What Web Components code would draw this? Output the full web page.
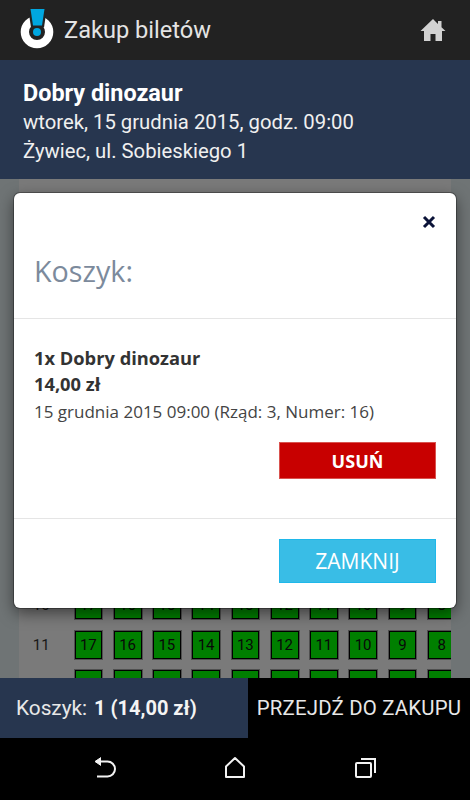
<!DOCTYPE html>
<html lang="pl">
<head>
<meta charset="utf-8">
<title>Zakup biletów</title>
<style>
  html, body { margin: 0; height: 100%; background: #000; overflow: hidden; }
  body { font-family: Roboto, sans-serif; }
  ticket-app { height: 800px; }
</style>
</head>
<body>
<ticket-app>
  <app-header title-text="Zakup biletów"></app-header>
  <event-info>
    <strong slot="name">Dobry dinozaur</strong>
    <span slot="date">wtorek, 15 grudnia 2015, godz. 09:00</span>
    <span slot="place">Żywiec, ul. Sobieskiego 1</span>
  </event-info>
  <seat-map first-row="10" rows="3"></seat-map>
  <cart-modal>
    <span slot="title">Koszyk:</span>
    <strong slot="item">1x Dobry dinozaur</strong>
    <strong slot="price">14,00 zł</strong>
    <span slot="details">15 grudnia 2015 09:00 (Rząd: 3, Numer: 16)</span>
  </cart-modal>
  <cart-bar summary="1 (14,00 zł)"></cart-bar>
  <nav-bar></nav-bar>
</ticket-app>

<script>
// Page shell: stacks the bars and keeps the modal over the seat map
class TicketApp extends HTMLElement {
  constructor() {
    super();
    this.attachShadow({ mode: 'open' });
    this.shadowRoot.innerHTML = `
      <style>
        :host {
          display: flex;
          flex-direction: column;
          position: relative;
          width: 470px;
          overflow: hidden;
        }
      </style>
      <slot></slot>
    `;
  }
}

class AppHeader extends HTMLElement {
  constructor() {
    super();
    this.attachShadow({ mode: 'open' });
  }

  connectedCallback() {
    this.shadowRoot.innerHTML = `
      <style>
        :host {
          display: flex;
          align-items: center;
          height: 60px;
          flex: none;
          box-sizing: border-box;
          padding: 0 24px 0 20px;
          background: #222;
          color: #e4e4e4;
        }
        .logo { width: 36px; height: 50px; flex: none; margin-top: -2px; }
        h1 {
          flex: 1;
          margin: 0 0 0 8px;
          font: 400 23.600px Roboto, sans-serif;
        }
        .home { width: 26px; height: 24px; flex: none; }
      </style>
      <svg class="logo" viewBox="0 0 36 50" aria-hidden="true">
        <path d="M17 11.700a16.300 16.300 0 1 0 0 32.600a16.300 16.300 0 1 0 0-32.600z M17 20a8 8 0 1 1 0 16a8 8 0 1 1 0-16z" fill="#fff" fill-rule="evenodd"/>
        <path d="M8 3h19l-3 20.500h-13z" fill="#222"/>
        <path d="M10.500 5h14l-2.500 16.500h-9z" fill="#00a7e1"/>
        <circle cx="17" cy="28" r="4" fill="#00a7e1"/>
      </svg>
      <h1>${this.getAttribute('title-text')}</h1>
      <svg class="home" viewBox="0 0 26 24" aria-hidden="true">
        <path d="M13 1 0.500 13h3.500v10h6.500v-7h5v7h6.500v-10h3.500l-4-3.800v-6.200h-3.500v2.900z" fill="#d2d2d2"/>
      </svg>
    `;
  }
}

class EventInfo extends HTMLElement {
  constructor() {
    super();
    this.attachShadow({ mode: 'open' });
    this.shadowRoot.innerHTML = `
      <style>
        :host {
          display: flex;
          flex-direction: column;
          flex: none;
          height: 119px;
          box-sizing: border-box;
          padding: 18px 23px 0;
          background: #27364f;
          color: #f0f0f0;
          font: 400 20.300px/28.500px Roboto, sans-serif;
        }
        ::slotted([slot="name"]) {
          color: #fff;
          font-size: 23.400px;
          font-weight: 700;
          line-height: 30px;
        }
      </style>
      <slot name="name"></slot>
      <slot name="date"></slot>
      <slot name="place"></slot>
    `;
  }
}

// Seat rows behind the dimmed overlay
class SeatMap extends HTMLElement {
  constructor() {
    super();
    this.attachShadow({ mode: 'open' });
  }

  connectedCallback() {
    const first = Number(this.getAttribute('first-row'));
    const count = Number(this.getAttribute('rows'));
    const seats = [17, 16, 15, 14, 13, 12, 11, 10, 9, 8];
    let rows = '';
    for (let r = first; r < first + count; r++) {
      rows += `<div class="row"><span class="label">${r}</span>` +
        seats.map(s => `<span class="seat">${s}</span>`).join('') + '</div>';
    }
    this.shadowRoot.innerHTML = `
      <style>
        :host {
          display: block;
          flex: none;
          height: 499px;
          background: #dfe8ea;
          position: relative;
          overflow: hidden;
        }
        .panel {
          margin: 0 19px;
          height: 100%;
          box-sizing: border-box;
          padding-top: 412.500px;
          background: #f4f4f4;
          overflow: hidden;
        }
        .row {
          display: flex;
          align-items: center;
          gap: 11.500px;
          height: 27.750px;
          margin-bottom: 11.500px;
          white-space: nowrap;
          font: 400 15px Roboto, sans-serif;
          color: #333;
        }
        .label { width: 44.500px; flex: none; text-align: center; margin-right: -0.500px; }
        .seat {
          display: flex;
          align-items: center;
          justify-content: center;
          flex: none;
          width: 27.750px;
          height: 27.750px;
          box-sizing: border-box;
          border: 1px solid #000;
          box-shadow: 0 0 0 1px rgba(0, 0, 0, 0.35);
          background: #0f0;
          color: #111;
        }
        .dim {
          position: absolute;
          inset: 0;
          background: rgba(0, 0, 0, 0.5);
        }
      </style>
      <div class="panel">${rows}</div>
      <div class="dim"></div>
    `;
  }
}

class CartModal extends HTMLElement {
  constructor() {
    super();
    this.attachShadow({ mode: 'open' });
    this.shadowRoot.innerHTML = `
      <style>
        :host {
          position: absolute;
          left: 14px;
          top: 193px;
          width: 442px;
          height: 415px;
          display: flex;
          flex-direction: column;
          box-sizing: border-box;
          background: #fff;
          border-radius: 6px;
          box-shadow: 0 0 0 1px rgba(0, 0, 0, 0.3), 0 5px 15px rgba(0, 0, 0, 0.5);
          font-family: "Open Sans", sans-serif;
          color: #333;
        }
        header {
          height: 126px;
          flex: none;
          box-sizing: border-box;
          padding: 0 20px;
          border-bottom: 1px solid #e5e5e5;
          position: relative;
        }
        .close {
          position: absolute;
          right: 20px;
          top: 22px;
          width: 14px;
          height: 14px;
        }
        .title {
          margin: 0;
          padding-top: 58px;
          font-size: 28.700px;
          font-weight: 400;
          line-height: 40px;
          color: #7c8a9c;
        }
        .body {
          height: 200px;
          flex: none;
          box-sizing: border-box;
          padding: 26px 20px 0;
          border-bottom: 1px solid #e5e5e5;
          display: flex;
          flex-direction: column;
        }
        .line { font-size: 18.300px; line-height: 26px; color: #333; }
        .line ::slotted(strong) { font-weight: 700; }
        .details { margin-top: 2px; font-size: 17px; line-height: 26px; color: #444; white-space: nowrap; }
        button {
          display: block;
          width: 157px;
          align-self: flex-end;
          box-sizing: border-box;
          border-radius: 0;
          font-family: "Open Sans", sans-serif;
          color: #fff;
          padding: 0;
        }
        .remove {
          height: 37px;
          margin-top: 17px;
          background: #c80000;
          border: 1px solid #d9534f;
          font-size: 18px;
          font-weight: 700;
        }
        footer {
          flex: 1;
          display: flex;
          flex-direction: column;
          padding: 20px 20px 0;
        }
        .dismiss {
          height: 44px;
          background: #39bde6;
          border: 1px solid #1fb8ea;
          font-size: 21px;
          font-weight: 400;
        }
      </style>
      <header>
        <svg class="close" viewBox="0 0 14 14" aria-hidden="true">
          <path d="M2 2 12 12M12 2 2 12" stroke="#0b1338" stroke-width="3" fill="none"/>
        </svg>
        <h2 class="title"><slot name="title"></slot></h2>
      </header>
      <div class="body">
        <div class="line"><slot name="item"></slot></div>
        <div class="line"><slot name="price"></slot></div>
        <div class="details"><slot name="details"></slot></div>
        <button class="remove" type="button">USUŃ</button>
      </div>
      <footer>
        <button class="dismiss" type="button">ZAMKNIJ</button>
      </footer>
    `;
  }
}

class CartBar extends HTMLElement {
  constructor() {
    super();
    this.attachShadow({ mode: 'open' });
  }

  connectedCallback() {
    this.shadowRoot.innerHTML = `
      <style>
        :host {
          display: flex;
          flex: none;
          height: 60px;
          background: #000;
          color: #e8e8e8;
          font: 400 20px Roboto, sans-serif;
          position: relative;
        }
        .cart {
          width: 248px;
          box-sizing: border-box;
          padding: 0 0 0 16px;
          display: flex;
          align-items: center;
          gap: 7px;
          background: #27364f;
          white-space: nowrap;
        }
        .cart span { font-size: 20.800px; }
        .cart strong { font-weight: 700; color: #f4f4f4; }
        .buy {
          flex: 1;
          display: flex;
          align-items: center;
          justify-content: center;
          font-size: 20.400px;
          letter-spacing: 0.200px;
          white-space: nowrap;
        }
      </style>
      <div class="cart"><span>Koszyk:</span><strong>${this.getAttribute('summary')}</strong></div>
      <div class="buy">PRZEJDŹ DO ZAKUPU</div>
    `;
  }
}

class NavBar extends HTMLElement {
  constructor() {
    super();
    this.attachShadow({ mode: 'open' });
    this.shadowRoot.innerHTML = `
      <style>
        :host {
          display: block;
          flex: none;
          height: 62px;
          position: relative;
          background: #000;
        }
        .bar {
          display: grid;
          grid-template-columns: 210px 131px 129px;
          height: 100%;
        }
        svg { width: 26px; height: 26px; margin-top: 17px; fill: none; stroke: #f2f2f2; stroke-width: 2; }
        .back { justify-self: start; margin-left: 92px; }
        .home { justify-self: start; margin-left: 12px; }
        .recent { justify-self: start; margin-left: 12px; }
      </style>
      <div class="bar">
        <svg class="back" viewBox="0 0 26 26" aria-hidden="true">
          <path d="M9 2.500 3 6.500l6 4" fill="#f2f2f2" stroke-width="1"/>
          <path d="M5 6.500h10.500a7.500 7.500 0 0 1 0 15H5"/>
        </svg>
        <svg class="home" viewBox="0 0 26 26" aria-hidden="true">
          <path d="M13 3 4 11.500V22h18V11.500z" stroke-linejoin="round"/>
        </svg>
        <svg class="recent" viewBox="0 0 26 26" aria-hidden="true">
          <rect x="3" y="8" width="15" height="14" rx="1"/>
          <path d="M8 4h14v14"/>
        </svg>
      </div>
    `;
  }
}

customElements.define('ticket-app', TicketApp);
customElements.define('app-header', AppHeader);
customElements.define('event-info', EventInfo);
customElements.define('seat-map', SeatMap);
customElements.define('cart-modal', CartModal);
customElements.define('cart-bar', CartBar);
customElements.define('nav-bar', NavBar);
</script>
</body>
</html>
